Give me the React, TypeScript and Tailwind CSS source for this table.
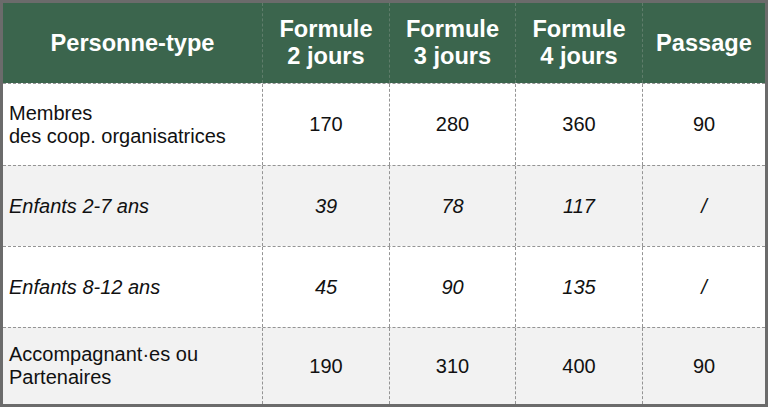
import React from "react";

const rows = [
  { label: ["Membres", "des coop. organisatrices"], vals: ["170", "280", "360", "90"], italic: false, bg: "bg-white", h: "h-[82px]" },
  { label: ["Enfants 2-7 ans"], vals: ["39", "78", "117", "/"], italic: true, bg: "bg-[#f2f2f2]", h: "h-[81px]" },
  { label: ["Enfants 8-12 ans"], vals: ["45", "90", "135", "/"], italic: true, bg: "bg-white", h: "h-[81px]" },
  { label: ["Accompagnant·es ou", "Partenaires"], vals: ["190", "310", "400", "90"], italic: false, bg: "bg-[#f2f2f2]", h: "h-[77px]" },
];

const heads = [["Personne-type"], ["Formule", "2 jours"], ["Formule", "3 jours"], ["Formule", "4 jours"], ["Passage"]];

export default function App() {
  return (
    <div className="w-[770px] h-[411px] bg-white" style={{ fontFamily: '"Liberation Sans", Arial, sans-serif' }}>
      <div className="w-[768px] border-[3px] border-[#6b6b6b] bg-white">
        <div className="grid grid-cols-[259px_127px_126px_127px_123px] h-[80px] bg-[#3b654d]">
          {heads.map((h, i) => (
            <div
              key={i}
              className={`flex flex-col items-center justify-center text-white font-bold text-[23.6px] leading-[27px] ${i > 0 ? "border-l border-dashed border-[#5f7d6b]" : ""}`}
            >
              {h.map((l, j) => (
                <span key={j}>{l}</span>
              ))}
            </div>
          ))}
        </div>
        {rows.map((r, ri) => (
          <div
            key={ri}
            className={`grid grid-cols-[259px_127px_126px_127px_123px] ${r.h} ${r.bg} border-t border-dashed border-[#949494] text-[20px] leading-[23px] text-[#111] ${r.italic ? "italic" : ""}`}
          >
            <div className="flex flex-col justify-center pl-[6px]">
              {r.label.map((l, j) => (
                <span key={j}>{l}</span>
              ))}
            </div>
            {r.vals.map((v, vi) => (
              <div key={vi} className="flex items-center justify-center border-l border-dashed border-[#949494]">
                {v}
              </div>
            ))}
          </div>
        ))}
      </div>
    </div>
  );
}
